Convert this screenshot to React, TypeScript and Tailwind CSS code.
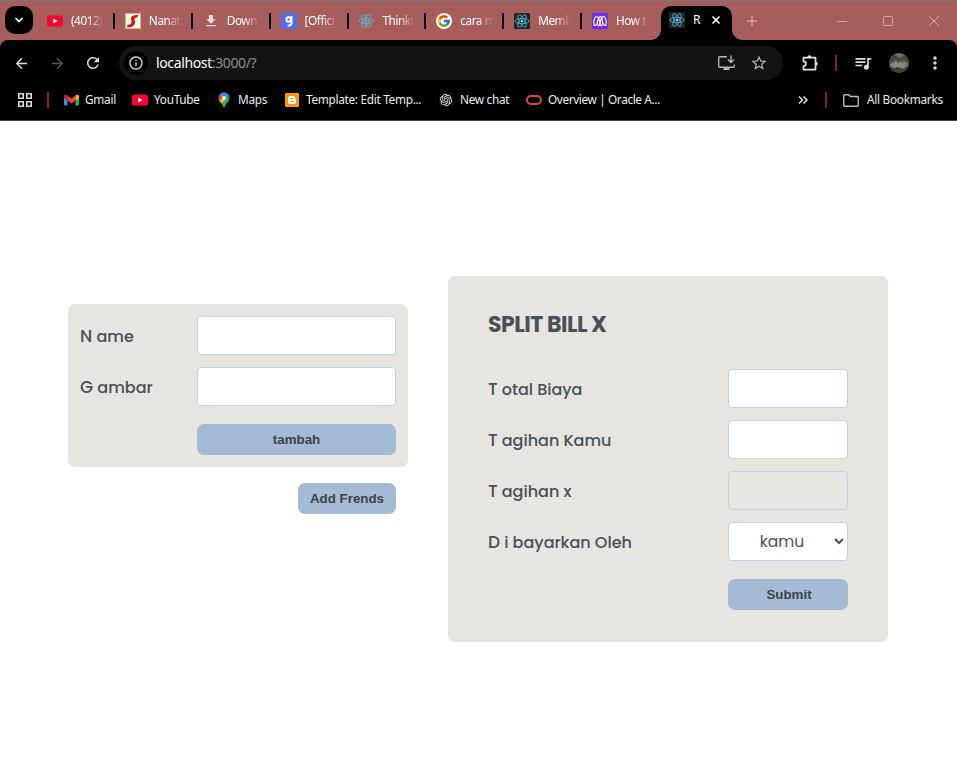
import React from "react";
import { FcGoogle } from "react-icons/fc";
import { SiOpenai } from "react-icons/si";
import {
  MdQueueMusic,
  MdMoreVert,
  MdArrowBack,
  MdArrowForward,
  MdRefresh,
  MdStarBorder,
  MdDownload,
  MdOutlineInfo,
} from "react-icons/md";

function ReactLogo({ dark = false }: { dark?: boolean }) {
  return (
    <svg viewBox="0 0 16 16" className="size-4 shrink-0">
      {dark && <rect width="16" height="16" rx="1.5" fill="#20262b" />}
      <g fill="none" stroke={dark ? "#4fb3cc" : "#62aac6"} strokeWidth={dark ? 0.85 : 1}>
        <ellipse cx="8" cy="8" rx="7" ry="2.7" />
        <ellipse cx="8" cy="8" rx="7" ry="2.7" transform="rotate(60 8 8)" />
        <ellipse cx="8" cy="8" rx="7" ry="2.7" transform="rotate(120 8 8)" />
      </g>
      <circle cx="8" cy="8" r="1.4" fill={dark ? "#61dafb" : "#5bb5d6"} />
    </svg>
  );
}

function YouTube() {
  return (
    <svg viewBox="0 0 16 16" className="size-4 shrink-0">
      <rect y="2.4" width="16" height="11.2" rx="2.6" fill="#ff0033" />
      <path d="M6.3 5.6v4.8L10.5 8z" fill="#fff" />
    </svg>
  );
}

function SLogo() {
  return (
    <svg viewBox="0 0 16 16" className="size-4 shrink-0">
      <rect x=".5" y=".5" width="15" height="15" fill="#fffdf2" stroke="#d8b878" />
      <path d="M13.300 2C9 1.800 5.500 3 6 6c.3 1.600 1 2.200.2 4-.6 1.500-1.700 1.800-3.700 1.700L2 14.200c4 .4 7.500-1 8-4.200.3-1.800-1-2.600-.6-4 .3-1 1.300-1.500 3-1.500z" fill="#cf1710" />
    </svg>
  );
}

function BlueLogo() {
  return (
    <svg viewBox="0 0 16 16" className="size-4 shrink-0">
      <rect width="16" height="16" rx="2.500" fill="#4f6ff0" />
      <circle cx="7.600" cy="6.500" r="2.200" fill="none" stroke="#fff" strokeWidth="2" />
      <path d="M10.500 3v6.200c0 2.200-1.300 3.500-3.800 3.500" fill="none" stroke="#fff" strokeWidth="2" />
    </svg>
  );
}

function GoogleLogo() {
  return (
    <span className="flex size-4 shrink-0 items-center justify-center rounded-full bg-white">
      <FcGoogle size={14} />
    </span>
  );
}

function PurpleLogo() {
  return (
    <svg viewBox="0 0 16 16" className="size-4 shrink-0">
      <rect width="16" height="16" fill="#6b2cf5" />
      <g fill="none" stroke="#fff" strokeWidth="1.100" strokeLinecap="round" strokeLinejoin="round">
        <path d="M2 12C1.300 8.500 2.500 3.500 4.500 3.500S8 8 8 10.500 6.500 13 5.800 12 5.500 8 6.500 5.500 9.500 3 10.200 5.500" />
        <path d="M14 12c.7-3.500-.5-8.500-2.500-8.500S8 8 8 10.500s1.500 2.500 2.200 1.500.3-4-.7-6.500" />
        <path d="M2 12c1.200.8 3 0 3.300-2.500M14 12c-1.200.8-3 0-3.300-2.500" />
      </g>
    </svg>
  );
}

function Gmail() {
  return (
    <svg viewBox="0 0 15 12" className="h-3 w-[15px] shrink-0">
      <path d="M0 2h3.500v9.500H1A1 1 0 0 1 0 10.500z" fill="#4285f4" />
      <path d="M11.500 2H15v8.500a1 1 0 0 1-1 1h-2.500z" fill="#34a853" />
      <path d="M11.500 1.500c1.400-1.400 3.500-1 3.500 1V4l-3.500 2.600z" fill="#fbbc04" />
      <path d="M3.500 1.500L7.500 4.600l4-3.100v5.100l-4 3-4-3z" fill="#ea4335" />
      <path d="M3.500 1.500C2.100.1 0 .5 0 2.500V4l3.500 2.600z" fill="#c5221f" />
    </svg>
  );
}

function MapsPin() {
  return (
    <svg viewBox="0 0 12 16" className="h-4 w-3 shrink-0">
      <clipPath id="pin">
        <path d="M6 .5a5.400 5.400 0 0 1 5.400 5.400c0 3.500-3.400 4.600-4.500 8.900-.3 1-1.500 1-1.800 0C4 10.500.6 9.400.6 5.900A5.400 5.400 0 0 1 6 .5z" />
      </clipPath>
      <g clipPath="url(#pin)">
        <rect width="12" height="16" fill="#34a853" />
        <path d="M0 0h12v4L6 6 4 8 0 5z" fill="#4285f4" />
        <path d="M0 2l5 3.500L1 10H0z" fill="#ea4335" />
        <path d="M0 10l5-4.500 2 2.500-5 5z" fill="#fbbc04" />
      </g>
      <circle cx="6" cy="5.900" r="2" fill="#fff" />
    </svg>
  );
}

function Blogger() {
  return (
    <svg viewBox="0 0 14 14" className="size-3.5 shrink-0">
      <rect width="14" height="14" rx="1" fill="#ff9800" />
      <path d="M5.500 3h2.300a2.300 2.300 0 0 1 2.300 2.200c0 .8.900.4.900 1.500V8.500A2.500 2.500 0 0 1 8.500 11h-3A2.500 2.500 0 0 1 3 8.500v-3A2.500 2.500 0 0 1 5.500 3z" fill="#fff" />
      <path d="M5.300 5.500h2.200M5.300 8.500h3.300" stroke="#ff9800" strokeWidth="1.100" strokeLinecap="round" />
    </svg>
  );
}

const tabs = [
  { icon: <YouTube />, text: "(4012)" },
  { icon: <SLogo />, text: "Nanat" },
  { icon: <MdDownload className="size-4 shrink-0 text-[#dedede]" />, text: "Down" },
  { icon: <BlueLogo />, text: "[Offici" },
  { icon: <ReactLogo />, text: "Thinki" },
  { icon: <GoogleLogo />, text: "cara m" },
  { icon: <ReactLogo dark />, text: "Memb" },
  { icon: <PurpleLogo />, text: "How t" },
];

function TabStrip() {
  return (
    <div className="flex h-10 items-center border-t border-[#777777] bg-[#a85d5d] pl-[5px] text-xs text-white">
      <div className="mr-3.5 mb-px flex size-7 shrink-0 items-center justify-center rounded-[10px] bg-black">
        <svg viewBox="0 0 10 10" className="size-2.5" fill="none" stroke="#fff" strokeWidth="1.600">
          <path d="M1.500 3L5 6.500 8.500 3" />
        </svg>
      </div>
      {tabs.map((t, i) => (
        <div key={i} className="flex w-[77.860px] shrink-0 items-center">
          {t.icon}
          <span className="ml-2 w-[34px] overflow-hidden text-[11.800px] tracking-[-0.450px] whitespace-nowrap [mask-image:linear-gradient(to_right,#000_50%,transparent_97%)]">
            {t.text}
          </span>
          {i < 7 && <span className="ml-2 h-4 w-0.5 bg-black" />}
        </div>
      ))}
      <div className="relative -ml-[9px] mt-[5px] flex h-[34px] w-[71px] shrink-0 items-center rounded-t-[10px] bg-black pb-1.5 pl-2">
        <span className="absolute bottom-0 -left-2.5 size-2.5 bg-[radial-gradient(circle_at_0_0,transparent_9.500px,#000_10px)]" />
        <span className="absolute -right-2.5 bottom-0 size-2.5 bg-[radial-gradient(circle_at_100%_0,transparent_9.500px,#000_10px)]" />
        <ReactLogo dark />
        <span className="ml-2 w-[7px]">R</span>
        <svg viewBox="0 0 8 8" className="ml-[12px] size-2" stroke="#fff" strokeWidth="1.500">
          <path d="M.5.5l7 7M7.500.5l-7 7" />
        </svg>
      </div>
      <svg viewBox="0 0 10 10" className="ml-[15px] size-2.5" stroke="#cf9e9e" strokeWidth="1.400">
        <path d="M5 0v10M0 5h10" />
      </svg>
      <svg viewBox="0 0 102 12" className="ml-[80px] h-3 w-[102px]" fill="none" stroke="#d1a5a5">
        <path d="M0 6.500h10M92 1l10 10M102 1L92 11" />
        <rect x="46.500" y="1.500" width="9" height="9" rx="1" />
      </svg>
    </div>
  );
}

function Toolbar() {
  return (
    <div className="flex h-[46px] items-center text-[#dcdcdc]">
      <MdArrowBack size={17} className="ml-[13px]" />
      <MdArrowForward size={17} className="ml-[19px] text-[#5a5a5a]" />
      <MdRefresh size={18} className="ml-[18px]" />
      <div className="ml-[17px] flex h-[34px] w-[664px] items-center rounded-full bg-[#131313]">
        <span className="ml-[5px] flex size-6 items-center justify-center rounded-full bg-black">
          <MdOutlineInfo size={16} />
        </span>
        <span className="ml-2 text-sm tracking-[-0.370px] whitespace-nowrap text-white">
          localhost<span className="text-[#8c8c8c]">:3000/?</span>
        </span>
        <svg viewBox="0 0 17 16" className="ml-auto h-4 w-[17px]" fill="none" stroke="#b5b5b5" strokeWidth="1.400">
          <path d="M9 1.700H1.700A1 1 0 0 0 .7 2.700v8.600a1 1 0 0 0 1 1h13.600a1 1 0 0 0 1-1V9.500M13 .5v6.500M10 4.500l3 3 3-3" />
          <path d="M5.500 14h6" strokeWidth="2" />
        </svg>
        <MdStarBorder size={18} className="mr-[15px] ml-[15px] text-[#b5b5b5]" />
      </div>
      <svg viewBox="0 0 17 17" className="ml-[19px] size-[17px]" fill="none" stroke="#e2e2e2" strokeWidth="1.700">
        <path d="M1.500 2.700h12v12h-12v-3.600a2.400 2.400 0 0 0 0-4.800z" strokeLinejoin="round" />
        <path d="M5.600 2.500a1.900 1.900 0 0 1 3.800 0zM13.500 6.800a1.900 1.900 0 0 1 0 3.800z" fill="#e2e2e2" strokeWidth=".5" />
      </svg>
      <span className="ml-4 h-4 w-0.5 bg-[#8c1d1d]" />
      <MdQueueMusic size={20} className="ml-4" />
      <svg viewBox="0 0 20 20" className="ml-4 size-5">
        <clipPath id="avatar"><circle cx="10" cy="10" r="10" /></clipPath>
        <g clipPath="url(#avatar)">
          <rect width="20" height="20" fill="#6c6c60" />
          <path d="M0 7l5-5 6 3 5-3 4 5v4l-5-4-4 3-5-3-6 5z" fill="#4b463c" />
          <path d="M2 12l2-3 1 2 2-3 2 3 3-3 1 3 3-2 1 3-2 3H5z" fill="#948880" />
          <path d="M0 14l5 1 4-1 5 2 6-3v7H0z" fill="#39443a" />
        </g>
      </svg>
      <MdMoreVert size={20} className="ml-4" />
    </div>
  );
}

function Bookmarks() {
  return (
    <div className="flex h-[35px] items-center border-b border-[#4a4a4a] pb-1.5 text-[11.800px] tracking-[-0.280px] whitespace-nowrap text-[#ececec]">
      <svg viewBox="0 0 14 14" className="ml-[18px] size-3.5 shrink-0" fill="none" stroke="#d8d8d8" strokeWidth="1.600">
        <path d="M.8.8h4.400v4.400H.8zM8.800.8h4.400v4.400H8.800zM.8 8.800h4.400v4.400H.8zM8.800 8.800h4.400v4.400H8.800z" />
      </svg>
      <span className="mr-[15px] ml-[15px] h-4 w-0.5 shrink-0 bg-[#8c1d1d]" />
      <Gmail />
      <span className="ml-1.5 w-[47px]">Gmail</span>
      <YouTube />
      <span className="ml-1.5 w-[64px]">YouTube</span>
      <MapsPin />
      <span className="ml-2 w-[47px]">Maps</span>
      <Blogger />
      <span className="ml-[7px] w-[133px] tracking-[-0.300px]">Template: Edit Temp...</span>
      <span className="flex size-3.5 shrink-0 items-center justify-center rounded-sm bg-[#131313]">
        <SiOpenai size={12} />
      </span>
      <span className="ml-[7px] w-[66px]">New chat</span>
      <svg viewBox="0 0 16 10" className="h-2.5 w-4 shrink-0" fill="none" stroke="#d8493c" strokeWidth="2">
        <rect x="1" y="1" width="14" height="8" rx="4" />
      </svg>
      <span className="ml-1.5 w-[250px] tracking-[-0.370px]">Overview | Oracle A...</span>
      <svg viewBox="0 0 10 8" className="h-2 w-2.5 shrink-0" fill="none" stroke="#e2e2e2" strokeWidth="1.500">
        <path d="M1 .5L4.500 4 1 7.500M5.500.5L9 4 5.500 7.500" />
      </svg>
      <span className="ml-[17px] h-4 w-0.5 shrink-0 bg-[#8c1d1d]" />
      <svg viewBox="0 0 16 13" className="ml-4 h-[13px] w-4 shrink-0" fill="none" stroke="#b8b8b8" strokeWidth="1.400">
        <path d="M.7 1.700a1 1 0 0 1 1-1h4l1.800 1.800h6.800a1 1 0 0 1 1 1v7.800a1 1 0 0 1-1 1H1.700a1 1 0 0 1-1-1z" />
      </svg>
      <span className="ml-2">All Bookmarks</span>
    </div>
  );
}

function Field({ initial, label, children }: { initial: string; label: string; children: React.ReactNode }) {
  return (
    <div className="flex h-[39px] items-center justify-between">
      <label className="pt-0.5">
        <span className="text-[17px] leading-none">{initial}</span> {label}
      </label>
      {children}
    </div>
  );
}

const inputBase = "h-[39px] rounded-[4px] border border-[#c5d1df] outline-none";
const buttonBase =
  "h-[31px] rounded-[7px] bg-[#a5bbd5] text-center font-['Liberation_Sans',Arial,sans-serif] text-[13.333px] font-bold text-[#3b4249]";

export default function App() {
  return (
    <div className="h-[775px] w-[957px] overflow-hidden bg-white font-['Noto_Sans','Open_Sans',sans-serif]">
      <header>
        <TabStrip />
        <div className="bg-[#a85d5d]">
          <div className="h-[81px] rounded-t-lg bg-black">
            <Toolbar />
            <Bookmarks />
          </div>
        </div>
      </header>
      <main className="flex items-start gap-10 pl-[68px] font-['Poppins','Inter',sans-serif] text-base font-medium text-[#495057]">
        <section className="mt-[183px] flex w-[340px] flex-col">
          <form className="flex h-[163px] flex-col gap-3 rounded-[7px] bg-[#e6e5e0] p-3">
            <Field initial="N" label="ame">
              <input className={`${inputBase} w-[199px] bg-white`} />
            </Field>
            <Field initial="G" label="ambar">
              <input className={`${inputBase} w-[199px] bg-white`} />
            </Field>
            <button type="button" className={`${buttonBase} mt-1.5 w-[199px] self-end`}>tambah</button>
          </form>
          <button className={`${buttonBase} mt-4 mr-3 w-[98px] self-end`}>Add Frends</button>
        </section>
        <form className="mt-[155px] flex h-[366px] w-[440px] flex-col gap-3 rounded-[7px] bg-[#e6e5e0] px-10 pt-8">
          <h2 className="mb-[16px] h-[33px] text-[22px] leading-[33px] font-bold tracking-[-0.5px]">SPLIT BILL X</h2>
          <Field initial="T" label="otal Biaya">
            <input className={`${inputBase} w-[120px] bg-white`} />
          </Field>
          <Field initial="T" label="agihan Kamu">
            <input className={`${inputBase} w-[120px] bg-white`} />
          </Field>
          <Field initial="T" label="agihan x">
            <input disabled className={`${inputBase} w-[120px] bg-[#e8e7e3]`} />
          </Field>
          <Field initial="D" label="i bayarkan Oleh">
            <select className={`${inputBase} w-[120px] bg-white text-center text-[15.500px] font-normal`}>
              <option>kamu</option>
            </select>
          </Field>
          <button type="button" className={`${buttonBase} mt-1.5 w-[120px] self-end pl-0.5`}>Submit</button>
        </form>
      </main>
    </div>
  );
}
